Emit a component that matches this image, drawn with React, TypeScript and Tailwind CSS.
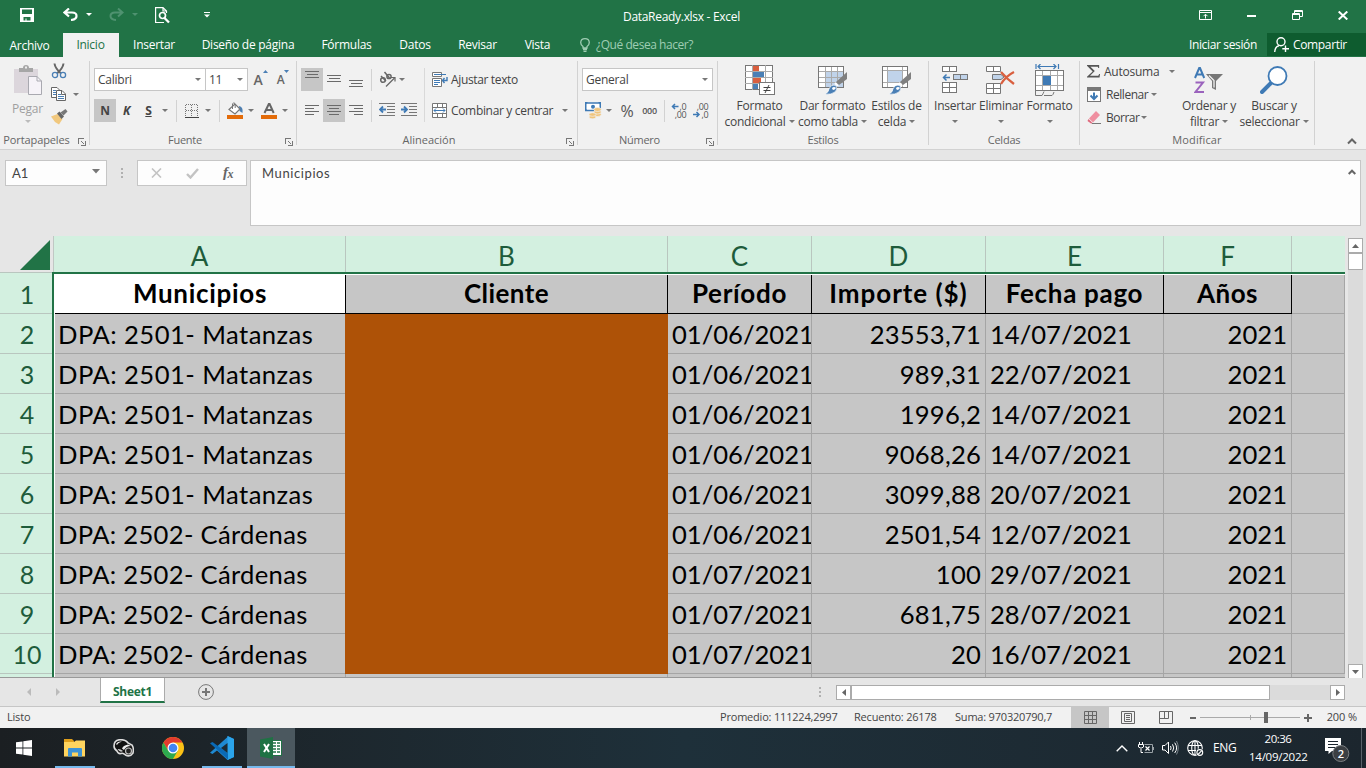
import React from "react";

type Kids = { children?: React.ReactNode };

const Arrow = ({ className = "" }: { className?: string }) => (
  <svg width="6" height="3" viewBox="0 0 6 3" className={`shrink-0 ${className}`}>
    <path d="M0 0H6L3 3Z" fill="#777" />
  </svg>
);
const Slot = ({ c = "", children }: Kids & { c?: string }) => (
  <div className={`flex shrink-0 items-center justify-center ${c}`}>{children}</div>
);
const Launcher = () => (
  <svg width="8" height="8" viewBox="0 0 8 8" fill="none" stroke="#777" shapeRendering="crispEdges">
    <path d="M.5 6V.5H6M7.5 3V7.5H3M3 3L6 6M7 4V7H4" />
  </svg>
);

function Group({ w, label, launcher, labelPad = "", children }: Kids & { w: string; label: string; launcher?: boolean; labelPad?: string }) {
  return (
    <div className={`flex h-[84px] shrink-0 flex-col border-r border-[#d2d2d2] ${w}`}>
      <div className="flex h-[71px] shrink-0">{children}</div>
      <div className={`relative flex h-[17px] shrink-0 items-center justify-center text-[11px] text-[#666] ${labelPad}`}>
        {label}
        {launcher && <span className="absolute right-[3px] top-[6px]"><Launcher /></span>}
      </div>
    </div>
  );
}

function Big({ w, icon, l1, l2, arrow = true }: { w: string; icon: React.ReactNode; l1: string; l2?: string; arrow?: boolean }) {
  return (
    <div className={`flex shrink-0 flex-col items-center whitespace-nowrap ${w}`}>
      <div className="flex h-9 items-center justify-center pt-0.5">{icon}</div>
      <div className="h-4 pt-px leading-4">{l1}</div>
      <div className="flex h-4 items-center gap-[3px] pt-px leading-4">{l2}{arrow && <Arrow />}</div>
    </div>
  );
}

const Lines = ({ rows }: { rows: [number, number, number][] }) => (
  <svg width="22" height="23" viewBox="0 0 22 23" fill="#6a6a6a" shapeRendering="crispEdges">
    {rows.map(([x, y, w]) => <rect key={y} x={x} y={y} width={w} height="1" />)}
  </svg>
);
const alignRows: [number, number, number][][] = [
  [[4, 3, 14], [6, 6, 11], [4, 9, 14]],
  [[4, 7, 14], [6, 10, 11], [4, 13, 14]],
  [[4, 12, 14], [6, 15, 11], [4, 18, 14]],
  [[4, 6, 14], [4, 9, 9], [4, 12, 14], [4, 15, 9]],
  [[4, 6, 14], [6, 9, 10], [4, 12, 14], [6, 15, 10]],
  [[4, 6, 14], [9, 9, 9], [4, 12, 14], [9, 15, 9]],
];

const PasteIcon = () => (
  <svg width="30" height="31" viewBox="0 0 30 31">
    <path d="M1 4H25V28H1Z" fill="#dcd6dc" />
    <path d="M6 3H10Q10 0 13 0T16 3H20V7H6Z" fill="#a6a6a6" /><rect x="12" y="1.5" width="2" height="2" fill="#eee" />
    <path d="M15.500 11.500H24L28.500 16V29.500H15.500Z" fill="#f6f3f8" stroke="#a9a9b0" /><path d="M24 11.500V16H28.500" fill="none" stroke="#a9a9b0" />
  </svg>
);
const Scissors = () => (
  <svg width="16" height="16" viewBox="0 0 16 16" fill="none">
    <path d="M3.500 .5Q4 5 10 10.500M12.500 .5Q12 5 6 10.500" stroke="#666" strokeWidth="2" />
    <circle cx="4" cy="12" r="2.600" stroke="#4a7fb5" strokeWidth="1.300" /><circle cx="12" cy="12" r="2.600" stroke="#4a7fb5" strokeWidth="1.300" />
  </svg>
);
const CopyIcon = () => (
  <svg width="16" height="15" viewBox="0 0 16 15" fill="#fff" stroke="#666">
    <path d="M.5 .5H6L9.500 4V10.500H.5Z" /><path d="M2 3.500H5M2 5.500H5M2 7.500H5" stroke="#4a7fb5" />
    <path d="M5.500 3.500H11L14.500 7V13.500H5.500Z" /><path d="M7 7.500H10M7 9.500H13M7 11.500H13" stroke="#4a7fb5" /><path d="M10.500 3.500V7.500H14.500" fill="none" />
  </svg>
);
const BrushIcon = () => (
  <svg width="17" height="16" viewBox="0 0 17 16">
    <path d="M0 7.500L6.500 5L11.500 10L8 15.500L4 13Z" fill="#f1c87e" />
    <path d="M6 4.500L8.500 2.500L13 7.500L10.500 10Z" fill="#666" /><path d="M9.500 3.500L14.500 0L16.500 2.500L12.500 6.500Z" fill="#777" />
  </svg>
);
const BordersIcon = () => (
  <svg width="14" height="14" viewBox="0 0 14 14" stroke="#777" fill="none" shapeRendering="crispEdges">
    <path d="M1 .5H13M1 6.500H13M.5 1V13M6.500 1V13M12.500 1V13" strokeDasharray="1 1" /><path d="M0 13.500H14" stroke="#444" />
  </svg>
);
const FillIcon = () => (
  <svg width="17" height="17" viewBox="0 0 17 17">
    <path d="M12 4Q16.500 5 15.500 11L12.500 9Z" fill="#4a7fb5" />
    <path d="M2 7.500L8 2L13 7L8 12Z" fill="#fff" stroke="#777" strokeWidth="1.200" /><path d="M5.500 7V2Q6.700-.8 8.200 2V6" fill="none" stroke="#777" />
    <rect y="13" width="16" height="4" fill="#e36c0a" />
  </svg>
);
const FontColor = () => (
  <svg width="16" height="17" viewBox="0 0 16 17">
    <path d="M3.500 11L7.800 2H8.600L12.700 11M5 8H11.200" fill="none" stroke="#666" strokeWidth="2" /><rect y="13" width="16" height="4" fill="#e36c0a" />
  </svg>
);
const GrowA = ({ up }: { up?: boolean }) => (
  <span className={`flex items-start font-semibold text-[#666] ${up ? "text-[14px]" : "text-[12px]"}`}>
    <span className="leading-[22px]">A</span>
    <svg width="5" height="4" viewBox="0 0 5 4" className="mt-px"><path d={up ? "M0 3L2.500 0L5 3Z" : "M0 0H5L2.500 3Z"} fill="#4a7fb5" /></svg>
  </span>
);
const OrientIcon = () => (
  <svg width="18" height="17" viewBox="0 0 18 17" fill="none" stroke="#666" strokeWidth="1.500">
    <ellipse cx="4" cy="9" rx="2.300" ry="2.300" /><path d="M2 5L7 10" /><path d="M5.500 1L10.500 7" /><circle cx="10" cy="5.500" r="2.100" />
    <path d="M7 15.500L15.500 7" strokeWidth="1.200" /><path d="M12 6.500H16V10.500" strokeWidth="1.200" />
  </svg>
);
const Indent = ({ right }: { right?: boolean }) => (
  <svg width="17" height="14" viewBox="0 0 17 14">
    <path d="M0 .5H16M8 3.500H16M8 6.500H16M8 9.500H16M0 12.500H16" stroke="#777" shapeRendering="crispEdges" />
    <path d={right ? "M0 6.500H5M3 3.500L6 6.500L3 9.500" : "M7 6.500H2M4 3.500L1 6.500L4 9.500"} fill="none" stroke="#3f7ab5" strokeWidth="1.800" />
  </svg>
);
const WrapIcon = () => (
  <svg width="17" height="16" viewBox="0 0 17 16" fill="none">
    <path d="M.5 .5H9.500V4.500H.5ZM.5 6.500H9.500V14.500H.5Z" fill="#fff" stroke="#777" />
    <path d="M2 2.500H14M2 8.500H8M2 10.500H8M2 12.500H6" stroke="#3f7ab5" /><path d="M15 5V8.500H10.500M12.500 6L10.500 8.500L12.500 11" stroke="#3f7ab5" strokeWidth="1.400" />
  </svg>
);
const MergeIcon = () => (
  <svg width="16" height="16" viewBox="0 0 16 16" fill="none">
    <path d="M.5 .5H14.500V14.500H.5ZM.5 4.500H14.500M.5 10.500H14.500M5.500 .5V4.500M10.500 .5V4.500M5.500 10.500V14.500M10.500 10.500V14.500" fill="#fff" stroke="#777" />
    <path d="M2 7.500H13M4 5.500L2 7.500L4 9.500M11 5.500L13 7.500L11 9.500" stroke="#3f7ab5" />
  </svg>
);
const MoneyIcon = () => (
  <svg width="17" height="17" viewBox="0 0 17 17">
    <rect x=".75" y="1" width="14.500" height="7.500" fill="#fff" stroke="#3f7ab5" strokeWidth="1.500" /><circle cx="8" cy="4.700" r="2" fill="#3f7ab5" /><path d="M0 0H3L0 3ZM16 0H13L16 3ZM0 9V6L3 9Z" fill="#3f7ab5" />
    <g fill="#f0c47c" stroke="#f1f1f1" strokeWidth=".7"><ellipse cx="12.500" cy="12.500" rx="3.700" ry="2" /><ellipse cx="12.500" cy="10" rx="3.700" ry="2" /><ellipse cx="12.500" cy="7.500" rx="3.700" ry="2" /><ellipse cx="7.500" cy="15" rx="3.500" ry="1.800" /><ellipse cx="7.500" cy="12.500" rx="3.500" ry="1.800" /></g>
  </svg>
);
const Decimals = ({ more }: { more?: boolean }) => (
  <svg width="16" height="16" viewBox="0 0 16 16" fill="#555" className="text-[9px]">
    <text x="15.500" y="7" textAnchor="end">{more ? ",0" : ",00"}</text>
    <text x="15.500" y="15" textAnchor="end">{more ? ",00" : ",0"}</text>
    <path d={more ? "M7.500 3.500H2M4 1L1.500 3.500L4 6" : "M0 11.500H5.500M3.500 9L6 11.500L3.500 14"} fill="none" stroke="#3f7ab5" strokeWidth="1.500" />
  </svg>
);
const CondIcon = () => (
  <svg width="30" height="31" viewBox="0 0 30 31" shapeRendering="crispEdges">
    <rect x=".5" y=".5" width="27" height="24" fill="#fff" stroke="#777" />
    <path d="M7.500 0V25M20.500 0V25M0 6.500H28M0 12.500H28M0 18.500H28" stroke="#aaa" />
    <rect x="8" y="1" width="6" height="5" fill="#d95f3f" /><rect x="8" y="7" width="11" height="5" fill="#4a7fb5" /><rect x="8" y="13" width="8" height="5" fill="#d95f3f" /><rect x="8" y="19" width="5" height="5" fill="#4a7fb5" />
    <rect x="14.500" y="17.500" width="15" height="12" fill="#fff" stroke="#777" />
    <path d="M18.500 22.500H25.500M18.500 25.500H25.500M24 20L20 28" stroke="#444" shapeRendering="auto" />
  </svg>
);
const BrushOver = () => (
  <g>
    <path d="M29 6V13L21 19L18 16Z" fill="#808080" /><path d="M17 17L20 20" stroke="#fff" strokeWidth="2" />
    <path d="M7 28Q11 26 11 23Q13 18 18 19.500Q20 23 17 26Q13 29 7 28Z" fill="#4a7fb5" stroke="#fff" strokeWidth=".6" /><path d="M14 22Q16 20 18 22L16 24Q14 24 14 22Z" fill="#fff" />
  </g>
);
const TableIcon = () => (
  <svg width="30" height="29" viewBox="0 0 30 29">
    <g shapeRendering="crispEdges"><rect x=".5" y=".5" width="25" height="21" fill="#fff" stroke="#777" /><rect x="7" y="6" width="18" height="15" fill="#c0d3ea" /><path d="M7.500 1V21M13.500 1V21M19.500 1V21M1 5.500H25M1 11.500H25M1 16.500H25" stroke="#aaa" /></g>
    <BrushOver />
  </svg>
);
const StylesIcon = () => (
  <svg width="30" height="29" viewBox="0 0 30 29">
    <g shapeRendering="crispEdges"><rect x=".5" y=".5" width="25" height="21" fill="#fff" stroke="#777" /><path d="M5.500 1V21M20.500 1V21M1 4.500H25M1 16.500H25" stroke="#aaa" /><rect x="6" y="5" width="14" height="11" fill="#c0d3ea" /></g>
    <BrushOver />
  </svg>
);
const InsertIcon = () => (
  <svg width="26" height="28" viewBox="0 0 26 28" fill="#fff" stroke="#777" shapeRendering="crispEdges">
    <path d="M.5 .5H14.500V5.500H.5ZM7.500 .5V5.500M.5 16.500H14.500V26.500H.5ZM7.500 16.500V26.500M.5 21.500H14.500" /><path d="M11.500 8.500H25.500V13.500H11.500ZM18.500 8.500V13.500" fill="#c0d3ea" />
    <path d="M8 11.500H2M4.500 8.500L1.500 11.500L4.500 14.500" stroke="#3f7ab5" fill="none" strokeWidth="1.500" shapeRendering="auto" />
  </svg>
);
const DeleteIcon = () => (
  <svg width="30" height="28" viewBox="0 0 30 28" fill="#fff" stroke="#777">
    <path d="M.5 .5H14.500V5.500H.5ZM7.500 .5V5.500M.5 17.500H14.500V27.500H.5ZM7.500 17.500V27.500M.5 22.500H14.500" /><path d="M6.500 8.500H15L18 11L15 13.500H6.500Z" fill="#c0d3ea" />
    <path d="M15 6Q21 13 28 18M28 6Q20 10 15 18" stroke="#d95f3f" strokeWidth="2.300" fill="none" />
  </svg>
);
const FormatIcon = () => (
  <svg width="29" height="32" viewBox="0 0 29 32" fill="none">
    <path d="M1 0V5M23.500 0V5M3 2.500H21M5.500 0L3 2.500L5.500 5M18.500 0L21 2.500L18.500 5" stroke="#3f7ab5" strokeWidth="1.200" />
    <rect x=".5" y="6.500" width="28" height="20" fill="#fff" stroke="#777" /><path d="M7.500 7V26M15.500 7V26M22.500 7V26M1 11.500H28M1 21.500H28" stroke="#aaa" /><rect x="8" y="12" width="8" height="9" fill="#3f7ab5" />
    <path d="M.5 27V31.500H7Q8 30 9 27.500M9 31.500H17Q18 31 19 28" stroke="#777" />
  </svg>
);

function TitleBar() {
  return (
    <div className="flex h-[33px] items-center text-white">
      <Slot c="w-[54px] pb-1"><svg width="14" height="14" viewBox="0 0 14 14"><path d="M0 0H14V14H0Z" fill="#fff" /><path d="M2 1.500H12V6H2ZM3.500 9H10.500V12.500H6.500V10.500H5.500V12.500H3.500Z" fill="#217346" /></svg></Slot>
      <Slot c="ml-2 w-4 pb-1"><svg width="15" height="13" viewBox="0 0 15 13" fill="none" stroke="#fff" strokeWidth="2.200"><path d="M6 .5L1.500 4.500L6 8.500M1.500 4.500H9Q13.500 4.500 13.500 8T8 12" /></svg></Slot>
      <Slot c="ml-2 w-[6px] pb-1"><svg width="6" height="3"><path d="M0 0H6L3 3Z" fill="#fff" /></svg></Slot>
      <Slot c="ml-4 w-4 pb-1"><svg width="15" height="13" viewBox="0 0 15 13" fill="none" stroke="#4f9270" strokeWidth="2"><path d="M9 .5L13.500 4.500L9 8.500M13.500 4.500H6Q1.500 4.500 1.500 8T7 12" /></svg></Slot>
      <Slot c="ml-2 w-[6px] pb-1"><svg width="6" height="3"><path d="M0 0H6L3 3Z" fill="#4f9270" /></svg></Slot>
      <Slot c="ml-4 w-4 pb-0.5"><svg width="15" height="17" viewBox="0 0 15 17" fill="none" stroke="#fff" strokeWidth="1.200"><path d="M9 15.500H.6V.6H8L11.500 4V6M8 .6V4H11.500" /><circle cx="7.500" cy="8.500" r="3" strokeWidth="1.700" /><path d="M9.500 11L14 15.500" strokeWidth="2.300" /></svg></Slot>
      <Slot c="ml-8 w-[10px] pb-1"><svg width="6" height="6"><path d="M0 .5H6" stroke="#fff" /><path d="M0 2.500H6L3 5.500Z" fill="#fff" /></svg></Slot>
      <div className="ml-[411px] w-[130px] text-[12px] tracking-[-0.3px]">DataReady.xlsx - Excel</div>
      <div className="ml-auto flex items-center pb-[3px]">
        <Slot c="w-[46px]"><svg width="13" height="10" viewBox="0 0 13 10" fill="none" stroke="#fff"><path d="M.5 .5H12.500V9.500H.5ZM.5 2.500H12.500M6.500 8.500V4.500M4.500 6.200L6.500 4.200L8.500 6.200" /></svg></Slot>
        <Slot c="w-[46px]"><svg width="9" height="6"><path d="M0 4H9" stroke="#fff" strokeWidth="2" /></svg></Slot>
        <Slot c="w-[46px]"><svg width="11" height="10" viewBox="0 0 11 10" fill="none" stroke="#fff"><path d="M2.500 3V.5H10.500V6.500H8M.5 3.500H7.500V9.500H.5ZM.5 4.500H7.500M2.500 1.500H10.500" /></svg></Slot>
        <Slot c="w-[46px]"><svg width="10" height="9" viewBox="0 0 10 9"><path d="M.7 .5L9.300 8.500M9.300 .5L.7 8.500" stroke="#fff" strokeWidth="2" /></svg></Slot>
      </div>
    </div>
  );
}

function Tabs() {
  return (
    <div className="flex h-6 items-center whitespace-nowrap text-[12px] tracking-[-0.25px] text-white">
      <Slot c="w-[63px] pr-1 pt-0.5">Archivo</Slot>
      <Slot c="h-6 w-14 bg-[#f1f1f1] pr-px text-[#217346]">Inicio</Slot>
      <Slot c="w-[70px]">Insertar</Slot>
      <Slot c="w-[118px]">Diseño de página</Slot>
      <Slot c="w-[79px]">Fórmulas</Slot>
      <Slot c="w-[58px]">Datos</Slot>
      <Slot c="w-[67px]">Revisar</Slot>
      <Slot c="w-[53px]">Vista</Slot>
      <Slot c="ml-[15px] w-3"><svg width="10" height="14" viewBox="0 0 10 14" fill="none" stroke="#9fcdb3" strokeWidth="1.300"><path d="M3 10V8.500Q.7 7 .7 4.500Q1 .7 5 .7T9.300 4.500Q9.300 7 7 8.500V10ZM3 11.500H7M3.500 13.300H6.500" /></svg></Slot>
      <span className="ml-[5px] tracking-[-0.45px] text-[#9fcdb3]">¿Qué desea hacer?</span>
      <span className="ml-auto pr-[10px] tracking-[-0.35px]">Iniciar sesión</span>
      <div className="flex h-[23px] w-[99px] items-center gap-1 self-start bg-[#0e5c2f] pl-[7px] tracking-[-0.35px]">
        <svg width="15" height="16" viewBox="0 0 15 16" fill="none" stroke="#fff" strokeWidth="1.400"><circle cx="7" cy="4.700" r="4" /><path d="M.7 15Q1 9.500 5 8.700M11.500 8.500V15M8.300 11.700H15" /></svg>
        Compartir
      </div>
    </div>
  );
}

const VSep = ({ c = "" }: { c?: string }) => <div className={`h-[22px] w-px shrink-0 bg-[#d2d2d2] ${c}`} />;

function Ribbon() {
  return (
    <div className="flex h-[93px] border-b border-[#d2d2d2] bg-[#f1f1f1] pt-1 text-[12px] tracking-[-0.25px] text-[#444]">
      <Group w="w-[90px]" label="Portapapeles" launcher labelPad="pr-[16px] tracking-[-0.1px]">
        <div className="flex w-[46px] flex-col items-center pl-[9px]">
          <div className="mt-1 h-[37px] shrink-0"><PasteIcon /></div>
          <span className="leading-[14px] text-[#a0a0a0]">Pegar</span>
          <svg width="6" height="3" className="mt-1 shrink-0"><path d="M0 0H6L3 3Z" fill="#bbb" /></svg>
        </div>
        <div className="flex flex-col pl-[5px]">
          <Slot c="h-[22px] w-4 pb-1 pt-px"><Scissors /></Slot>
          <div className="flex h-[23px] items-center gap-1.5"><CopyIcon /><Arrow /></div>
          <Slot c="h-[22px] w-[17px]"><BrushIcon /></Slot>
        </div>
      </Group>

      <Group w="w-[207px]" label="Fuente" launcher labelPad="pr-4">
        <div className="flex flex-col pl-1 pt-[7px]">
          <div className="flex h-[23px]">
            <div className="flex w-[112px] items-center justify-between border border-[#c6c6c6] bg-white pl-[3px] pr-1">Calibri<Arrow /></div>
            <div className="-ml-px flex w-[43px] items-center justify-between border border-[#c6c6c6] bg-white pl-[3px] pr-1">11<Arrow /></div>
            <Slot c="w-[25px]"><GrowA up /></Slot>
            <Slot c="w-[20px]"><GrowA /></Slot>
          </div>
          <div className="mt-2 flex h-[23px] items-center">
            <Slot c="h-[23px] w-[22px] bg-[#c6c6c6] text-[12px] font-bold">N</Slot>
            <Slot c="w-[21px] text-[12px] font-bold italic">K</Slot>
            <Slot c="w-[23px] text-[12px] font-bold underline">S</Slot>
            <Slot c="w-[10px]"><Arrow /></Slot>
            <Slot c="w-3"><VSep /></Slot>
            <Slot c="w-[19px]"><BordersIcon /></Slot>
            <Slot c="w-[14px]"><Arrow /></Slot>
            <Slot c="w-2"><VSep /></Slot>
            <Slot c="w-6"><FillIcon /></Slot>
            <Slot c="w-2"><Arrow /></Slot>
            <Slot c="w-7"><FontColor /></Slot>
            <Slot c="w-1"><Arrow /></Slot>
          </div>
        </div>
      </Group>

      <Group w="w-[281px]" label="Alineación" launcher labelPad="pr-4 tracking-[0px]">
        <div className="flex w-[123px] flex-col pl-1 pt-[7px]">
          <div className="flex h-[23px] items-center">
            <div className="bg-[#c6c6c6]"><Lines rows={alignRows[0]} /></div><Lines rows={alignRows[1]} /><Lines rows={alignRows[2]} />
            <VSep c="ml-1" /><Slot c="ml-[7px]"><OrientIcon /></Slot><Arrow className="ml-0.5" />
          </div>
          <div className="mt-2 flex h-[23px] items-center">
            <Lines rows={alignRows[3]} /><div className="bg-[#c6c6c6]"><Lines rows={alignRows[4]} /></div><Lines rows={alignRows[5]} />
            <VSep c="ml-1" /><Slot c="ml-[7px] pb-0.5"><Indent /></Slot><Slot c="ml-[5px] pb-0.5"><Indent right /></Slot>
          </div>
        </div>
        <div className="ml-1 mt-[7px] h-[54px] w-px shrink-0 bg-[#d9d9d9]" />
        <div className="flex flex-col pl-[7px] pt-[7px]">
          <div className="flex h-[23px] items-center gap-[2px] tracking-[-0.35px]"><WrapIcon />Ajustar texto</div>
          <div className="mt-2 flex h-[23px] items-center gap-[3px]"><MergeIcon /><span className="w-[104px] whitespace-nowrap tracking-[-0.33px]">Combinar y centrar</span><Arrow className="ml-1" /></div>
        </div>
      </Group>

      <Group w="w-[140px]" label="Número" launcher labelPad="pr-[16px]">
        <div className="flex flex-col pl-1 pt-[7px]">
          <div className="flex h-[23px] w-[131px] items-center justify-between border border-[#c6c6c6] bg-white pl-[3px] pr-1">General<Arrow /></div>
          <div className="mt-2 flex h-[23px] items-center">
            <Slot c="w-[22px]"><MoneyIcon /></Slot>
            <Slot c="w-[10px]"><Arrow /></Slot>
            <Slot c="w-[26px] text-[16px] font-medium text-[#555]">%</Slot>
            <Slot c="w-[19px] text-[9px] font-semibold text-[#555]">000</Slot>
            <Slot c="w-[10px]"><VSep /></Slot>
            <Slot c="w-[20px]"><Decimals more /></Slot>
            <Slot c="w-[24px]"><Decimals /></Slot>
          </div>
        </div>
      </Group>

      <Group w="w-[211px]" label="Estilos">
        <div className="w-[6px]" />
        <Big w="w-[71px]" icon={<CondIcon />} l1="Formato" l2="condicional" />
        <Big w="w-[75px]" icon={<TableIcon />} l1="Dar formato" l2="como tabla" />
        <Big w="w-[53px]" icon={<StylesIcon />} l1="Estilos de" l2="celda" />
      </Group>

      <Group w="w-[151px]" label="Celdas">
        <div className="w-[3px]" />
        <Big w="w-[46px]" icon={<InsertIcon />} l1="Insertar" />
        <Big w="w-[46px]" icon={<DeleteIcon />} l1="Eliminar" />
        <Big w="w-[51px]" icon={<FormatIcon />} l1="Formato" />
      </Group>

      <Group w="w-[235px]" label="Modificar" labelPad="tracking-[0.1px]">
        <div className="flex w-[95px] flex-col pl-[7px]">
          <div className="flex h-[21px] items-center"><svg width="15" height="15" viewBox="0 0 15 15"><path d="M0 0H14V3.500H13L12.500 2H4L9 7L3.500 12.500H13L14 10.500H15L14.500 14.500H0V13.500L6.500 7.500L0 1Z" fill="#555" /></svg><span className="ml-1 w-[65px] shrink-0">Autosuma</span><Arrow /></div>
          <div className="flex h-[23px] items-center pt-0.5"><svg width="14" height="15" viewBox="0 0 14 15"><rect x=".5" y=".5" width="13" height="14" fill="#fff" stroke="#777" /><rect width="14" height="4" fill="#777" /><path d="M7 5.500V12M3.500 8.500L7 12L10.500 8.500" fill="none" stroke="#3f7ab5" strokeWidth="2" /></svg><span className="ml-[5px] mr-[3px] tracking-[-0.45px]">Rellenar</span><Arrow /></div>
          <div className="flex h-[23px] items-center pt-0.5"><svg width="15" height="13" viewBox="0 0 15 13"><path d="M2 7.500L9 0L13 4L6 11.500Z" fill="#ef8fa0" /><path d="M1.500 8L6 12.500H4L.5 10Z" fill="#e0687c" /><path d="M5 12.500H14" stroke="#777" /></svg><span className="ml-[4px] mr-[2px] tracking-[-0.5px]">Borrar</span><Arrow /></div>
        </div>
        <Big w="w-[68px]" l1="Ordenar y" l2="filtrar" icon={
          <svg width="30" height="28" viewBox="0 0 30 28" fill="none"><path d="M1 12L5.200 2H6L10.200 12M2.500 8.500H9" stroke="#3f7ab5" strokeWidth="2" /><path d="M1.500 16.500H9L1.500 26H10" stroke="#9b63bd" strokeWidth="2" /><path d="M12 8H29L22 15V24L18 22V15Z" fill="#777" /><path d="M15 9.500L20 14.500V21.500" stroke="#f1f1f1" strokeWidth="1.300" /></svg>} />
        <Big w="w-[62px]" l1="Buscar y" l2="seleccionar" icon={
          <svg width="28" height="28" viewBox="0 0 28 28"><path d="M2 26L11 17" stroke="#3f7ab5" strokeWidth="4" strokeLinecap="round" /><circle cx="17.500" cy="10" r="9" fill="#fff" stroke="#3f7ab5" strokeWidth="1.800" /></svg>} />
      </Group>
      <div className="ml-auto flex items-end pb-[4px] pr-[9px]"><svg width="10" height="7" viewBox="0 0 10 7"><path d="M1 5.500L5 1.500L9 5.500" fill="none" stroke="#666" strokeWidth="2" /></svg></div>
    </div>
  );
}

function FormulaBar() {
  return (
    <div className="flex h-[86px] items-start bg-[#e6e6e6] pl-[5px] pt-[10px] text-[12px] text-[#444]">
      <div className="flex h-[26px] w-[102px] items-center justify-between border border-[#c6c6c6] bg-[#fdfdfd] pl-[6px] pr-[6px] font-[Lato,sans-serif] text-[13px]"><span className="pt-0.5">A1</span>
        <svg width="8" height="5" className="mb-[3px]"><path d="M0 0H8L4 4.500Z" fill="#777" /></svg></div>
      <div className="ml-[14px] flex h-[26px] flex-col justify-center gap-[2px]">{[0, 1, 2].map((i) => <i key={i} className="size-[2px] bg-[#b0b0b0]" />)}</div>
      <div className="ml-[14px] flex h-[26px] w-[110px] items-center border border-[#c6c6c6] bg-[#fdfdfd]">
        <Slot c="w-9"><svg width="11" height="10" viewBox="0 0 11 10"><path d="M1 .5L10 9.500M10 .5L1 9.500" stroke="#c3c3c3" strokeWidth="1.600" /></svg></Slot>
        <Slot c="w-9"><svg width="13" height="11" viewBox="0 0 13 11"><path d="M1 6L4.500 9.500L12 1" fill="none" stroke="#c3c3c3" strokeWidth="2.400" /></svg></Slot>
        <Slot c="w-9 pb-0.5 font-['Liberation_Serif',serif] text-[15px] font-bold italic tracking-[-0.5px] text-[#666]">f<span className="pt-1 text-[12px]">x</span></Slot>
      </div>
      <div className="ml-[3px] flex h-[66px] w-[1111px] justify-between border border-[#c6c6c6] bg-[#fdfdfd] pl-[11px] pr-[4px] pt-[4px] font-[Lato,sans-serif] text-[13px] leading-[17px] tracking-[0.6px]">
        Municipios
        <svg width="8" height="6" viewBox="0 0 8 6" className="mt-1"><path d="M.7 5L4 1.700L7.300 5" fill="none" stroke="#666" strokeWidth="2" /></svg>
      </div>
    </div>
  );
}

const cols: [string, string][] = [["A", "w-[292px]"], ["B", "w-[322px]"], ["C", "w-[144px]"], ["D", "w-[174px]"], ["E", "w-[178px]"], ["F", "w-[128px]"]];
const heads: [string, string][] = [
  ["Municipios", "tracking-[0.7px]"],
  ["Cliente", "tracking-[0.45px]"],
  ["Período", "tracking-[0.7px]"],
  ["Importe ($)", "tracking-[0.95px]"],
  ["Fecha pago", "tracking-[0.7px]"],
  ["Años", "tracking-[0.5px]"],
];
const data: [string, string, string, string][] = [
  ["DPA: 2501- Matanzas", "01/06/2021", "23553,71", "14/07/2021"],
  ["DPA: 2501- Matanzas", "01/06/2021", "989,31", "22/07/2021"],
  ["DPA: 2501- Matanzas", "01/06/2021", "1996,2", "14/07/2021"],
  ["DPA: 2501- Matanzas", "01/06/2021", "9068,26", "14/07/2021"],
  ["DPA: 2501- Matanzas", "01/06/2021", "3099,88", "20/07/2021"],
  ["DPA: 2502- Cárdenas", "01/06/2021", "2501,54", "12/07/2021"],
  ["DPA: 2502- Cárdenas", "01/07/2021", "100", "29/07/2021"],
  ["DPA: 2502- Cárdenas", "01/07/2021", "681,75", "28/07/2021"],
  ["DPA: 2502- Cárdenas", "01/07/2021", "20", "16/07/2021"],
];

function Sheet() {
  const cell = "shrink-0 overflow-hidden whitespace-nowrap border-r border-b border-[#a5a5a5] pt-px";
  return (
    <div className="flex h-[442px] bg-[#e6e6e6]">
      <div className="w-[1345px] overflow-hidden border-b border-[#999] font-[Lato,sans-serif] text-[25.6px] leading-[38px] text-black">
        <div className="flex h-9 text-center text-[26px] leading-[41px] text-[#1e5c3b]">
          <div className="flex w-[54px] shrink-0 items-end justify-end border-r border-[#c0c8c4] pb-[2px] pr-[3px]"><svg width="30" height="30"><path d="M30 0V30H0Z" fill="#217346" /></svg></div>
          {cols.map(([n, w]) => <div key={n} className={`shrink-0 border-r border-[#b9c6bf] bg-[#d3f0e0] ${w}`}>{n}</div>)}
          <div className="w-[53px] bg-[#d3f0e0]" />
        </div>
        <div className="flex">
          <div className="w-[52px] shrink-0 border-t border-[#b9c6bf] bg-[#d3f0e0] text-center text-[25px] text-[#1e5c3b]">
            {[1, 2, 3, 4, 5, 6, 7, 8, 9, 10].map((n) => <div key={n} className={`border-b border-[#b9c6bf] pl-[2px] ${n === 1 ? "h-[41px] pt-[2px]" : "h-10 pt-px"}`}>{n}</div>)}
          </div>
          <div className="w-[1293px] shrink-0 border-l-2 border-t-2 border-[#217346]">
            <div className="border-l border-t border-white bg-[#c6c6c6]">
              <div className="flex h-[39px] text-[26px] font-bold leading-[37px]">
                {heads.map(([h, t], i) => <div key={h} className={`shrink-0 border-b border-r border-black text-center ${t} ${i === 0 ? "w-[291px] bg-white" : cols[i][1]}`}>{h}</div>)}
                <div className="w-[53px] border-b border-r border-[#a5a5a5]" />
              </div>
              {data.map(([a, c, d, e], i) => (
                <div key={i} className="flex h-10">
                  <div className={`w-[290px] pl-[3px] ${i < 5 ? "tracking-[0.45px]" : "tracking-[0.3px]"} ${cell} border-r-0`}>{a}</div>
                  <div className="w-[323px] shrink-0 bg-[#ae5207]" />
                  <div className={`w-[144px] pl-1 ${cell}`}>{c}</div>
                  <div className={`w-[174px] pr-1 text-right tracking-[0.2px] ${cell}`}>{d}</div>
                  <div className={`w-[178px] pl-1 ${cell}`}>{e}</div>
                  <div className={`w-[128px] pr-1 text-right ${cell}`}>2021</div>
                  <div className={`w-[53px] ${cell}`} />
                </div>
              ))}
              <div className="flex h-10">
                {cols.map(([n, w], i) => <div key={n} className={`shrink-0 border-r border-[#a5a5a5] ${i === 0 ? "w-[291px]" : w}`} />)}
              </div>
            </div>
          </div>
        </div>
      </div>
      <div className="ml-[3px] mt-[2px] flex h-[441px] w-[15px] flex-col bg-[#dbdbdb]">
        <Slot c="h-[15px] border border-[#ababab] bg-white"><svg width="7" height="4"><path d="M0 4H7L3.500 0Z" fill="#666" /></svg></Slot>
        <div className="h-[17px] border border-[#ababab] bg-white" />
        <Slot c="mt-auto h-[15px] border border-[#ababab] bg-white"><svg width="7" height="4"><path d="M0 0H7L3.500 4Z" fill="#666" /></svg></Slot>
      </div>
    </div>
  );
}

function SheetTabs() {
  return (
    <div className="flex h-7 bg-[#e6e6e6]">
      <Slot c="h-[27px] w-[58px]"><svg width="4" height="8"><path d="M4 0V8L0 4Z" fill="#bbb" /></svg></Slot>
      <Slot c="-ml-[2px] h-[27px] w-[4px]"><svg width="4" height="8"><path d="M0 0V8L4 4Z" fill="#bbb" /></svg></Slot>
      <Slot c="ml-10 h-[25px] w-[65px] border-x border-b-2 border-x-[#ababab] border-b-[#217346] bg-white pt-[4px] text-[12px] font-bold tracking-[-0.3px] text-[#217346]">Sheet1</Slot>
      <Slot c="ml-[33px] h-7"><svg width="16" height="16" viewBox="0 0 16 16" fill="none" stroke="#777"><circle cx="8" cy="8" r="7.400" /><path d="M8 4V12M4 8H12" strokeWidth="2" /></svg></Slot>
      <div className="ml-[605px] mt-2 flex flex-col gap-[2px] pt-[1px]">{[0, 1, 2].map((i) => <i key={i} className="size-[2px] bg-[#b0b0b0]" />)}</div>
      <div className="ml-[15px] mt-[7px] flex h-[15px] w-[509px] bg-[#dbdbdb]">
        <Slot c="w-[15px] border border-[#ababab] bg-white"><svg width="4" height="7"><path d="M4 0V7L0 3.500Z" fill="#666" /></svg></Slot>
        <div className="w-[419px] border border-[#ababab] bg-white" />
        <Slot c="ml-auto w-[15px] border border-[#ababab] bg-white"><svg width="4" height="7"><path d="M0 0V7L4 3.500Z" fill="#666" /></svg></Slot>
      </div>
    </div>
  );
}

function StatusBar() {
  return (
    <div className="flex h-[22px] items-center whitespace-nowrap border-t border-[#c6c6c6] bg-[#f1f1f1] pl-[7px] text-[11px] tracking-[-0.2px] text-[#444]">
      <span className="w-[713px]">Listo</span>
      <span className="w-[134px]">Promedio: 111224,2997</span>
      <span className="w-[101px]">Recuento: 26178</span>
      <span className="w-[116px]">Suma: 970320790,7</span>
      <Slot c="h-[21px] w-[38px] bg-[#c6c6c6]"><svg width="13" height="13" viewBox="0 0 13 13" fill="none" stroke="#666"><path d="M.5 .5H12.500V12.500H.5ZM4.500 0V13M8.500 0V13M0 4.500H13M0 8.500H13" /></svg></Slot>
      <Slot c="w-[38px]"><svg width="14" height="13" viewBox="0 0 14 13" fill="none" stroke="#666"><path d="M.5 .5H13.500V12.500H.5ZM3.500 2.500H10.500V10.500H3.500ZM5 4.500H9M5 6.500H9M5 8.500H9" /></svg></Slot>
      <Slot c="w-[38px]"><svg width="14" height="13" viewBox="0 0 14 13" fill="none" stroke="#666"><path d="M.5 .5H13.500V12.500H.5ZM5.500 0V7.500M9.500 0V7.500M0 7.500H9.500" /></svg></Slot>
      <svg width="124" height="12" viewBox="0 0 124 12" className="ml-[5px] shrink-0"><path d="M0 6H6M114 6H122" stroke="#666" strokeWidth="2" /><path d="M118 2V10" stroke="#666" strokeWidth="2" /><path d="M10 5.500H110M60.500 3V8" stroke="#aaa" /><rect x="74" y="0" width="4" height="11" fill="#666" /></svg>
      <span className="ml-auto pr-[9px] tracking-[-0.1px]">200 %</span>
    </div>
  );
}

function Taskbar() {
  return (
    <div className="flex h-10 items-center bg-linear-to-r from-[#1b1f22] via-[#1e303a] via-50% to-[#1c262e] text-[12px] tracking-[-0.2px] text-white">
      <Slot c="h-10 w-[55px] pr-[7px]"><svg width="16" height="16" viewBox="0 0 16 16" fill="#fff"><path d="M0 2.300L6.500 1.400V7.600H0ZM7.300 1.300L16 0V7.600H7.300ZM0 8.400H6.500V14.600L0 13.700ZM7.300 8.400H16V16L7.300 14.700Z" /></svg></Slot>
      <Slot c="h-10 w-10 border-b-2 border-[#76b9ed] pt-[2px]"><svg width="22" height="18" viewBox="0 0 22 18"><path d="M0 0H8L10 2V5H0Z" fill="#e09f1b" /><path d="M0 3H10L12 1.500H21V17.500H0Z" fill="#ffd45e" /><path d="M4 17.500V10Q4 9 5 9H17Q18 9 18 10V17.500H14V13.500H8V17.500Z" fill="#3e93d5" /></svg></Slot>
      <Slot c="h-10 w-[57px]"><svg width="21" height="18" viewBox="0 0 21 18"><path d="M1 7Q1 1 7 .7Q13 .5 15 4L19 6Q21 9 20 14Q17 18.500 12.500 16Q10 13.500 8 14.500Q5 15 4 12Q1 10 1 7Z" fill="#111" stroke="#ddd" strokeWidth="1.600" /><path d="M3 5Q5 2 9 2.700Q5 3.500 4 6ZM9 9.500Q10 6.500 15 5.500L18 7Q13 7 11 11Z" fill="#eee" /><path d="M4.500 10Q7 9.500 10 12Q7 14 4.500 10Z" fill="#ccc" /><circle cx="15.500" cy="12" r="3" fill="#222" stroke="#bbb" strokeWidth="1.200" /></svg></Slot>
      <Slot c="h-10 w-[42px]"><svg width="22" height="22" viewBox="0 0 22 22"><circle cx="11" cy="11" r="11" fill="#fbc116" /><path d="M1.470 5.500A11 11 0 0 1 20.530 5.500H11L6.240 13.750Z" fill="#e33b2e" /><path d="M1.470 5.500A11 11 0 0 0 11 22L15.760 13.750L6.240 13.750Z" fill="#2da94f" /><circle cx="11" cy="11" r="5.500" fill="#fff" /><circle cx="11" cy="11" r="4.300" fill="#4285f4" /></svg></Slot>
      <Slot c="ml-[8px] h-10 w-10 border-b-2 border-[#76b9ed] pt-[2px]"><svg width="24" height="24" viewBox="0 0 24 24"><path d="M17.500 0L24 3V21L17.500 24L7 14.500L2.500 18L0 16.700L17.500 1Z" fill="#1f8ad2" /><path d="M17.500 0L24 3V21L17.500 24Z" fill="#2ba4ea" /><path d="M0 7.300L2.500 6L18 17.500V23.500Z" fill="#0a6ab6" /><path d="M17.500 7V17L11 12Z" fill="#1c2c35" /></svg></Slot>
      <Slot c="ml-[5px] h-10 w-12 border-b-2 border-[#76b9ed] bg-[#4b585f] pt-[2px]"><svg width="22" height="22" viewBox="0 0 22 22"><rect x="11" y="3.500" width="10.500" height="15" fill="#fff" stroke="#217346" /><path d="M13 6H20M13 9H20M13 12H20M13 15H20" stroke="#217346" strokeWidth="1.600" /><path d="M16.500 5V17" stroke="#fff" /><path d="M0 2.500L13 0V22L0 19.500Z" fill="#1f7244" /><path d="M4 7L9 15M9 7L4 15" stroke="#fff" strokeWidth="2" /></svg></Slot>
      <div className="ml-auto flex h-10 items-center">
        <svg width="12" height="7" viewBox="0 0 12 7"><path d="M.7 6.300L6 1L11.300 6.300" fill="none" stroke="#fff" strokeWidth="1.400" /></svg>
        <svg width="16" height="12" viewBox="0 0 16 12" fill="none" stroke="#fff" className="ml-[10px]"><path d="M1.500 0V2.500M4.500 0V2.500M.5 2.500H5.500V5Q3 7.500 .5 5ZM3 7V10.500H5" /><path d="M6.500 2.500H14.500V10.500H6.500M15.500 5V8" stroke="#9aa2a7" /><path d="M7.500 4.500L11.500 8.500M11.500 4.500L7.500 8.500" strokeWidth="1.200" /></svg>
        <svg width="17" height="14" viewBox="0 0 17 14" fill="none" stroke="#fff" className="ml-[8px]"><path d="M.5 4.500H3L6.500 1V12.500L3 9H.5ZM8.500 5Q9.700 7 8.500 9M10.500 3.300Q13 7 10.500 10.500" /><path d="M12.700 1.700Q16.500 7 12.700 12" /><path d="M14.500 0Q18 7 14.500 13.500" stroke="#7d878e" /></svg>
        <svg width="17" height="17" viewBox="0 0 17 17" fill="none" stroke="#fff" strokeWidth="1.100" className="ml-[8px]"><circle cx="8" cy="8" r="7.300" /><ellipse cx="8" cy="8" rx="3.300" ry="7.300" /><path d="M1 5.500H15M1 10.500H9M8 .7V15" /><circle cx="12.800" cy="12.500" r="4" fill="#1c2830" stroke="none" /><circle cx="12.800" cy="12.500" r="2.900" /><path d="M11 14.500L14.700 10.700" /></svg>
        <span className="ml-[9px] w-[24px] tracking-[-0.4px]">ENG</span>
        <div className="ml-[12px] w-[58px] text-center text-[11.500px] leading-[18px] tracking-[-0.25px]"><div className="tracking-[-0.5px]">20:36</div><div className="whitespace-nowrap">14/09/2022</div></div>
        <svg width="26" height="26" viewBox="0 0 26 26" className="ml-[18px] mr-[10px] mt-[5px]"><path d="M0 0H16V13H7L3.500 16V13H0Z" fill="#fff" /><path d="M3 3.500H13M3 6.500H13M3 9.500H10" stroke="#1c262e" /><circle cx="15.800" cy="15.500" r="8" fill="#3b3f43" stroke="#7b7f82" /><text x="15.800" y="19.500" textAnchor="middle" fontSize="11" fontWeight="600" fill="#fff">2</text></svg>
        <div className="h-10 w-px bg-[#59626a]" /><div className="w-[4px]" />
      </div>
    </div>
  );
}

export default function App() {
  return (
    <div className="flex h-[768px] w-[1366px] flex-col overflow-hidden bg-[#217346] font-['Open_Sans','Noto_Sans',sans-serif]">
      <TitleBar />
      <Tabs />
      <Ribbon />
      <FormulaBar />
      <Sheet />
      <SheetTabs />
      <StatusBar />
      <Taskbar />
    </div>
  );
}
